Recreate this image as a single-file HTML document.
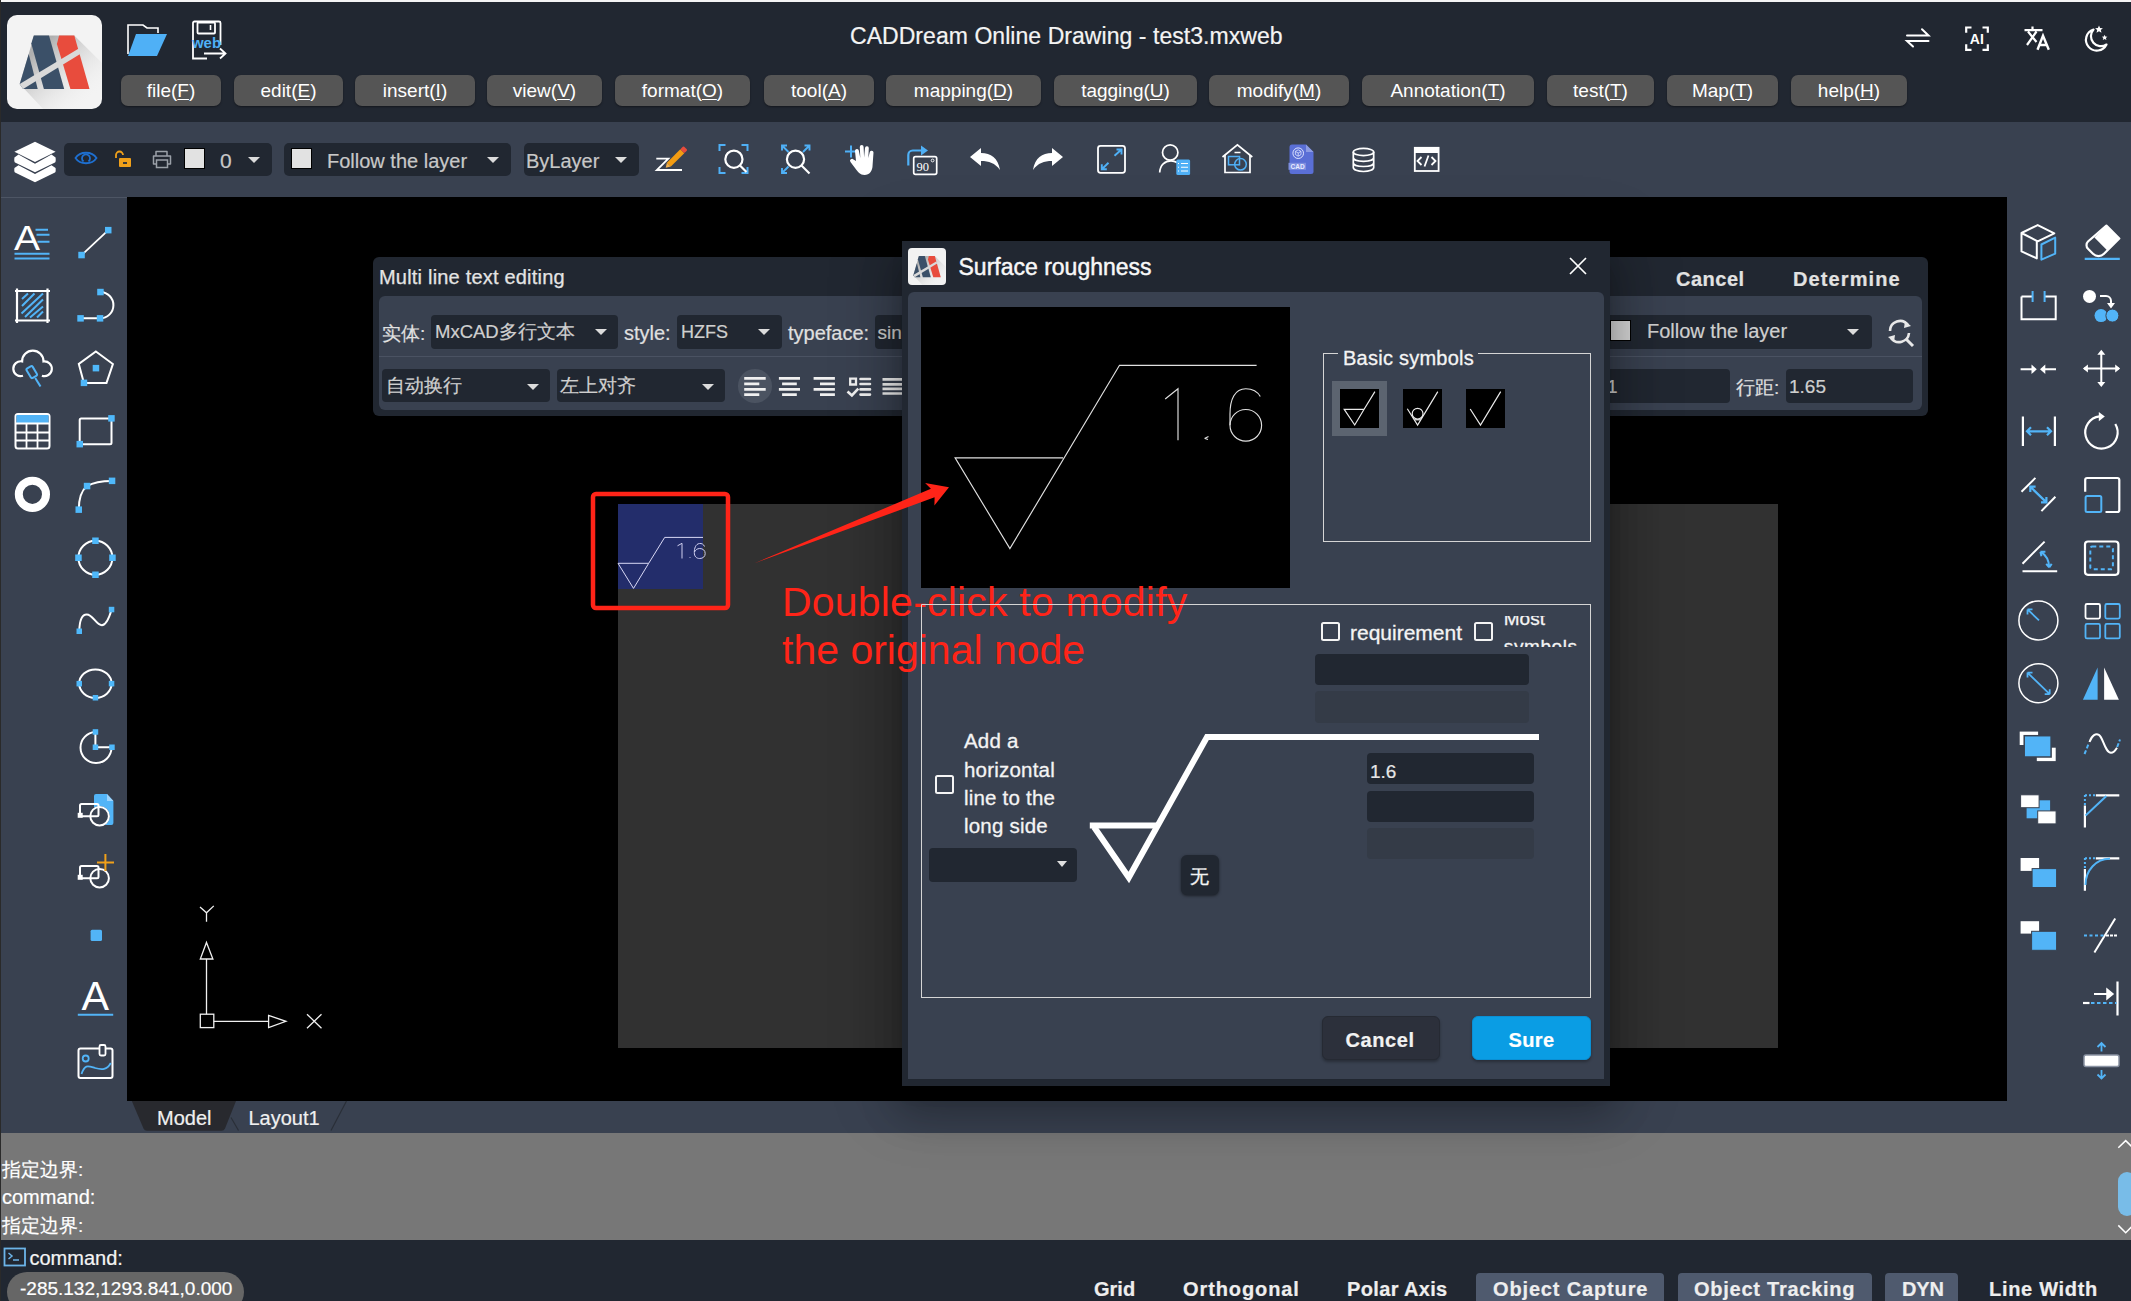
<!DOCTYPE html><html><head><meta charset="utf-8"><style>*{margin:0;padding:0;box-sizing:border-box}
html,body{width:2131px;height:1301px;overflow:hidden;background:#000;font-family:"Liberation Sans",sans-serif;color:#fff}
.a{position:absolute}
.t{position:absolute;white-space:nowrap;line-height:1;-webkit-text-stroke-width:0.2px}
#topline{left:0;top:0;width:2131px;height:2px;background:#f4f4f4}
#header{left:0;top:2px;width:2131px;height:120px;background:#212731}
#toolbar{left:0;top:122px;width:2131px;height:75px;background:#394150}
#ltb{left:0;top:197px;width:127px;height:904px;background:#394150;border-top:1px solid #4d5564}
#rtb{left:2007px;top:197px;width:124px;height:904px;background:#394150}
#canvas{left:127px;top:197px;width:1880px;height:904px;background:#000}
#tabbar{left:0;top:1101px;width:2131px;height:32px;background:#394150}
#cmdhist{left:0;top:1133px;width:2131px;height:107px;background:#777}
#cmdline{left:0;top:1240px;width:2131px;height:61px;background:#212731}
#leftedge{left:0;top:0;width:1px;height:1301px;background:#2a2a2a}
.mbtn{position:absolute;top:75px;height:31px;background:#555;border-radius:7px;box-shadow:0 1px 2px rgba(0,0,0,.4);color:#fff;font-size:19px;text-align:center;line-height:31px}
.mbtn u{text-decoration:underline;text-underline-offset:2px}
.dd{position:absolute;background:#212731;border-radius:4px}
.ddtxt{position:absolute;color:#cfd0d2;font-size:20px;white-space:nowrap;line-height:1}
.caret{position:absolute;width:0;height:0;border-left:6px solid transparent;border-right:6px solid transparent;border-top:6px solid #dcdcdc}
</style></head><body><div id="header" class="a"></div><div id="topline" class="a"></div>
<div id="toolbar" class="a"></div>
<div id="canvas" class="a"></div>
<div id="ltb" class="a"></div><div id="rtb" class="a"></div>
<div id="tabbar" class="a"></div><div id="cmdhist" class="a"></div><div id="cmdline" class="a"></div>
<div id="leftedge" class="a"></div>
<div class="a" style="left:7px;top:15px;width:95px;height:94px;border-radius:10px;background:#f3f3f3;overflow:hidden">
<svg width="95" height="94" viewBox="0 0 95 94" style="position:absolute;left:0;top:0">
<defs><linearGradient id="lsh" x1="0.2" y1="0.2" x2="0.85" y2="0.85"><stop offset="0" stop-color="#a8a8a8" stop-opacity="0.9"/><stop offset="1" stop-color="#f3f3f3" stop-opacity="0"/></linearGradient></defs>
<polygon points="27,20.5 67.3,20.5 97,50 97,96 38,96 12.7,69 21.7,39" fill="url(#lsh)"/>
<polygon points="21.7,39 30.7,74 16.1,74 12.7,69" fill="#3b5068"/>
<polygon points="26.8,20.5 42,20.5 57.2,74 36.9,74 24.3,28.4" fill="#3b5068"/>
<polygon points="52.1,20.5 67.3,20.5 82.5,74 63.4,74 49.9,28.9" fill="#e84c3d"/>
<polygon points="12.7,68.9 71.8,33.4 73.2,39.1 16.1,74" fill="#d9d9d9"/>
</svg></div>
<svg class="a" style="left:126px;top:22px" width="44" height="38" viewBox="0 0 44 38">
<path d="M2,32 V3 H17 L21,6 H32 V11" fill="none" stroke="#fff" stroke-width="1.6"/>
<polygon points="10,12 41,12 31,34 2,34" fill="#4fb0f6"/>
</svg>
<svg class="a" style="left:190px;top:20px" width="40" height="42" viewBox="0 0 40 42">
<path d="M17,38.5 H3 V3 A1.5,1.5 0 0 1 4.5,1.5 H29 A1.5,1.5 0 0 1 30.5,3 V25" fill="none" stroke="#fff" stroke-width="1.8"/>
<rect x="7.5" y="2.5" width="17.5" height="11" rx="1" fill="none" stroke="#fff" stroke-width="1.8"/>
<line x1="20.5" y1="5" x2="20.5" y2="10" stroke="#fff" stroke-width="1.6"/>
<text x="2" y="27.5" font-family="Liberation Sans" font-weight="700" font-size="14.5" fill="#4fb0f6" textLength="29" lengthAdjust="spacingAndGlyphs">web</text>
<path d="M14,33.5 H35 M30,28.5 L35.5,33.5 L30,38.5" fill="none" stroke="#fff" stroke-width="1.8"/>
</svg>
<div class="t" style="left:850.0px;top:24.9px;font-size:23px;color:#f4f4f4;letter-spacing:0.05px;">CADDream Online Drawing - test3.mxweb</div>
<div class="mbtn" style="left:121px;width:100px">file(<u>F</u>)</div>
<div class="mbtn" style="left:234px;width:109px">edit(<u>E</u>)</div>
<div class="mbtn" style="left:355px;width:120px">insert(<u>I</u>)</div>
<div class="mbtn" style="left:487px;width:115px">view(<u>V</u>)</div>
<div class="mbtn" style="left:615px;width:135px">format(<u>O</u>)</div>
<div class="mbtn" style="left:764px;width:110px">tool(<u>A</u>)</div>
<div class="mbtn" style="left:886px;width:155px">mapping(<u>D</u>)</div>
<div class="mbtn" style="left:1054px;width:143px">tagging(<u>U</u>)</div>
<div class="mbtn" style="left:1209px;width:140px">modify(<u>M</u>)</div>
<div class="mbtn" style="left:1362px;width:172px">Annotation(<u>T</u>)</div>
<div class="mbtn" style="left:1547px;width:107px">test(<u>T</u>)</div>
<div class="mbtn" style="left:1667px;width:111px">Map(<u>T</u>)</div>
<div class="mbtn" style="left:1791px;width:116px">help(<u>H</u>)</div>
<svg class="a" style="left:0;top:0" width="2131" height="130" viewBox="0 0 2131 130">
<g fill="none" stroke="#fff" stroke-width="2" stroke-linecap="round">
<path d="M1907,35.5 H1928.5 L1922,29.3 M1928.5,40.9 H1907 L1913,46.5"/>
<path d="M1971.5,27.5 H1966.2 V32.8 M1966.2,44.2 V49.8 H1971.5 M1982.5,27.5 H1987.8 V32.8 M1987.8,44.2 V49.8 H1982.5" stroke-width="2.2" stroke-linecap="butt"/>
<path d="M2024.5,30.2 H2042.5 M2032.5,26.5 V30.2 M2028,31.5 L2036.5,42 M2036.5,31.5 L2027,45" stroke-width="2.2" stroke-linecap="butt"/>
<path d="M2037.5,49.8 L2043,35.8 L2048.8,49.8 M2039.5,45 H2046.8" stroke-width="2.4" stroke-linecap="butt"/>
<path d="M2093.5,29.5 A10.8,10.8 0 1 0 2106.5,44.5 A10,10 0 0 1 2093.5,29.5 Z" stroke-width="2.2" stroke-linejoin="round"/>
</g>
<text x="1969.8" y="44.3" font-family="Liberation Sans" font-weight="700" font-size="15.5" fill="#fff" textLength="14" lengthAdjust="spacingAndGlyphs">AI</text>
<path d="M2099,25.5 l1.1,2.6 2.8,0.2 -2.1,1.8 0.7,2.7 -2.5,-1.5 -2.5,1.5 0.7,-2.7 -2.1,-1.8 2.8,-0.2z" fill="#fff"/>
<path d="M2104.6,34.8 l0.8,1.8 2,0.2 -1.5,1.3 0.5,1.9 -1.8,-1 -1.8,1 0.5,-1.9 -1.5,-1.3 2,-0.2z" fill="#fff"/>
</svg>
<svg class="a" style="left:14px;top:141px" width="42" height="42" viewBox="0 0 42 42">
<path d="M21,0.8 L41.6,10.8 L21,21 L0.4,10.8Z" fill="#fff"/>
<path d="M4.5,13.6 L21,22.8 L37.5,13.6 L41.6,16.5 Q42,21 41,21.5 L21,31.3 L1,21.5 Q0,21 0.4,16.5Z" fill="#fff"/>
<path d="M4.5,24.2 L21,33 L37.5,24.2 L41.6,27 Q42,31 41,31.6 L21,41.3 L1,31.6 Q0,31 0.4,27Z" fill="#fff"/>
</svg>
<div class="dd" style="left:64px;top:143px;width:208px;height:33px;border-radius:5px"></div>
<svg class="a" style="left:74px;top:150px" width="24" height="16" viewBox="0 0 24 16">
<path d="M1.5,8 C6,1 18,1 22.5,8 C18,15 6,15 1.5,8Z" fill="none" stroke="#1e6fd0" stroke-width="1.8"/>
<path d="M9.5,11.5 A4,4 0 1 1 14.5,11.5" fill="none" stroke="#1e6fd0" stroke-width="1.8"/>
</svg>
<svg class="a" style="left:114px;top:150px" width="18" height="18" viewBox="0 0 18 18">
<path d="M2,8 V5 A3.5,3.5 0 0 1 9,5" fill="none" stroke="#f0a01a" stroke-width="1.8"/>
<rect x="5" y="8" width="12" height="9" rx="1" fill="#f0a01a"/><rect x="9" y="12" width="4" height="2" fill="#3a3a3a"/>
</svg>
<svg class="a" style="left:152px;top:149px" width="20" height="20" viewBox="0 0 20 20">
<path d="M4,7 V2.5 H15 V7 M4,15 H1.5 V7 H18.5 V15 H16" fill="none" stroke="#9aa0a8" stroke-width="1.5" stroke-linejoin="round"/>
<rect x="4.5" y="11" width="11" height="7.5" fill="none" stroke="#9aa0a8" stroke-width="1.5"/>
</svg>
<div class="a" style="left:184px;top:148px;width:21px;height:21px;background:#e2e2e2;border:1px solid #000"></div>
<div class="t" style="left:220.0px;top:150.2px;font-size:21px;color:#c8c8c8;">0</div>
<div class="caret" style="left:248px;top:157px"></div>
<div class="dd" style="left:284px;top:143px;width:227px;height:33px;border-radius:5px"></div>
<div class="a" style="left:291px;top:148px;width:21px;height:21px;background:#e2e2e2;border:1px solid #000"></div>
<div class="t" style="left:327.0px;top:150.5px;font-size:20px;color:#c8c8c8;">Follow the layer</div>
<div class="caret" style="left:487px;top:157px"></div>
<div class="dd" style="left:524px;top:143px;width:115px;height:33px;border-radius:5px"></div>
<div class="t" style="left:526.0px;top:150.5px;font-size:20px;color:#c8c8c8;">ByLayer</div>
<div class="caret" style="left:615px;top:157px"></div>
<svg class="a" style="left:640px;top:135px" width="60" height="50" viewBox="640 135 60 50">
<path d="M656.3,158.7 H668.3 L656.8,170 H682" fill="none" stroke="#fff" stroke-width="1.8"/>
<g transform="translate(3.5,-3.5) rotate(-45 673.5 160)"><rect x="662" y="157.2" width="19" height="5.6" fill="#f39c12"/><rect x="681" y="157.2" width="4.5" height="5.6" rx="1" fill="#e74c3c"/><path d="M662,157.2 L657.5,160 L662,162.8Z" fill="#f3b04a"/></g>
</svg>
<svg class="a" style="left:700px;top:135px" width="250" height="50" viewBox="700 135 250 50">
<path d="M719.5,151 V145 H725.5 M741.5,145 H747.5 V151 M747.5,167 V173 H741.5 M725.5,173 H719.5 V167" fill="none" stroke="#4fb0f6" stroke-width="2"/>
<circle cx="733.9" cy="159.2" r="8.6" fill="none" stroke="#fff" stroke-width="2.2"/>
<line x1="740" y1="165.5" x2="746.5" y2="172" stroke="#fff" stroke-width="2.2"/>
<path d="M788.5,152 L782,145.5 M782,150.5 V145.5 H787 M803,152 L809.5,145.5 M804.5,145.5 H809.5 V150.5 M788.5,166.5 L782,173 M782,168 V173 H787" fill="none" stroke="#4fb0f6" stroke-width="1.9"/>
<circle cx="795.5" cy="159.2" r="8.6" fill="none" stroke="#fff" stroke-width="2.2"/>
<line x1="801.5" y1="165.5" x2="809.5" y2="173.5" stroke="#fff" stroke-width="2.2"/>
<path d="M851,145.5 V157.5 M845,151.5 H857" stroke="#4fb0f6" stroke-width="2"/>
<path d="M856,161 L855,151 A1.9,1.9 0 0 1 858.8,150.6 L860.3,158 L859.8,147 A1.9,1.9 0 0 1 863.6,147 L864.1,157.5 L865,148 A1.9,1.9 0 0 1 868.8,148.3 L868.3,158 L869.8,152 A1.9,1.9 0 0 1 873.5,152.5 L872.6,165 C872.6,171 869.5,175 864.5,175 C860,175 858,172 855,168 L850.5,162 A1.9,1.9 0 0 1 853.5,159.5 Z" fill="#fff"/>
<path d="M908.3,165.5 V155 A4.5,4.5 0 0 1 912.8,150.5 H922" fill="none" stroke="#4fb0f6" stroke-width="2.2"/>
<path d="M921,145.5 L928,150.5 L921,155.5Z" fill="#4fb0f6"/>
<rect x="913.7" y="156.6" width="23" height="17.8" rx="1.8" fill="none" stroke="#fff" stroke-width="1.7"/>
<text x="916.5" y="171" font-family="Liberation Serif" font-size="12.5" fill="#fff" textLength="12.5" lengthAdjust="spacingAndGlyphs">90</text>
<circle cx="932.6" cy="160.5" r="1.4" fill="none" stroke="#fff" stroke-width="0.9"/>
</svg>
<svg class="a" style="left:969px;top:146px" width="32" height="26" viewBox="0 0 32 26">
<path d="M1,11 L12,2 V7 C22,7 29,12 31,24 C26,17 20,15 12,15 V20Z" fill="#fff"/>
</svg>
<svg class="a" style="left:1032px;top:146px" width="32" height="26" viewBox="0 0 32 26">
<path d="M31,11 L20,2 V7 C10,7 3,12 1,24 C6,17 12,15 20,15 V20Z" fill="#fff"/>
</svg>
<svg class="a" style="left:1085px;top:135px" width="370" height="50" viewBox="1085 135 370 50">
<rect x="1098" y="145.8" width="27" height="27" rx="2.5" fill="none" stroke="#fff" stroke-width="1.8"/>
<path d="M1114.5,155.8 L1121.5,149.5 M1116.5,149.5 H1121.5 V154.5 M1108.5,162.8 L1101.8,169.2 M1101.8,164.2 V169.2 H1106.8" fill="none" stroke="#4fb0f6" stroke-width="1.9"/>
<circle cx="1170.2" cy="152.5" r="7.7" fill="none" stroke="#fff" stroke-width="1.7"/>
<path d="M1159.7,172.5 C1160,165 1165,160.8 1171,160.8 C1173.5,160.8 1175.5,161.5 1177,162.5" fill="none" stroke="#fff" stroke-width="1.7"/>
<rect x="1176.3" y="159.4" width="13.8" height="15.5" rx="1.5" fill="#4fb0f6"/>
<path d="M1181,163.5 H1188 M1181,167.3 H1188 M1181,171 H1188" stroke="#fff" stroke-width="1.1"/>
<path d="M1178,163.5 h1 M1178,167.3 h1 M1178,171 h1" stroke="#fff" stroke-width="1.1"/>
<path d="M1222.5,157 L1237.4,144.8 L1252.3,157" fill="none" stroke="#fff" stroke-width="1.7"/>
<path d="M1225,155 V172.5 H1250 V155" fill="none" stroke="#fff" stroke-width="1.7"/>
<path d="M1234.5,152.5 H1240.5" stroke="#fff" stroke-width="1.5"/>
<rect x="1228.5" y="156.5" width="11" height="8.3" fill="none" stroke="#4fb0f6" stroke-width="1.5"/>
<circle cx="1240.5" cy="164.3" r="5.8" fill="none" stroke="#4fb0f6" stroke-width="1.5"/>
<path d="M1289.5,147 A2.5,2.5 0 0 1 1292,144.5 H1306 L1313.5,152 V171.5 A2.5,2.5 0 0 1 1311,174 H1292 A2.5,2.5 0 0 1 1289.5,171.5Z" fill="#5a6fd6"/>
<path d="M1306,144.5 V152 H1313.5Z" fill="#8d9ce4"/>
<rect x="1288.5" y="162.8" width="17.5" height="7" fill="#7e8fe0"/>
<text x="1290.5" y="169" font-family="Liberation Sans" font-weight="700" font-size="6.5" fill="#e8ecff">CAD</text>
<circle cx="1298.2" cy="153.2" r="5.3" fill="none" stroke="#dfe4ff" stroke-width="1"/>
<path d="M1298.2,149.8 L1301,151.4 V154.6 L1298.2,156.2 L1295.4,154.6 V151.4Z M1295.4,151.4 L1298.2,153 L1301,151.4 M1298.2,153 V156.2" fill="none" stroke="#dfe4ff" stroke-width="0.8"/>
<ellipse cx="1363.5" cy="152" rx="10.2" ry="3.6" fill="none" stroke="#fff" stroke-width="1.7"/>
<path d="M1353.3,152 V167.5 C1353.3,169.7 1357.5,171.5 1363.5,171.5 C1369.5,171.5 1373.7,169.7 1373.7,167.5 V152 M1353.3,157.5 C1353.3,159.7 1357.5,161.3 1363.5,161.3 C1369.5,161.3 1373.7,159.7 1373.7,157.5 M1353.3,162.7 C1353.3,164.9 1357.5,166.5 1363.5,166.5 C1369.5,166.5 1373.7,164.9 1373.7,162.7" fill="none" stroke="#fff" stroke-width="1.7"/>
<rect x="1414.8" y="147.8" width="23.8" height="23.2" fill="none" stroke="#fff" stroke-width="1.8"/>
<rect x="1414.8" y="147.8" width="23.8" height="5.2" fill="#fff"/>
<path d="M1421.5,157 L1417.5,161 L1421.5,165 M1431.5,157 L1435.5,161 L1431.5,165 M1428.5,155.5 L1424.5,166.5" fill="none" stroke="#fff" stroke-width="1.8"/>
</svg>

<svg class="a" style="left:0;top:0" width="2131" height="1301" viewBox="0 0 2131 1301">
<g fill="none" stroke="#fff" stroke-width="2">
<text x="14" y="250" font-family="Liberation Sans" font-size="35" fill="#fff" stroke="none" textLength="26" lengthAdjust="spacingAndGlyphs">A</text>
<path d="M35.5,229.8 H48 M36.5,234.8 H49.5 M37.5,241.8 H49.5 M14.5,253.7 H49.5 M14.5,258.4 H49.5" stroke="#52b4f7" stroke-width="2"/>
<path d="M15,291 H50 M15,320.5 H50 M17,288.5 V323 M47.5,288.5 V323" stroke-width="2.2"/>
<path d="M22,299 L28,293.5 M22,306 L34.5,293.5 M21.5,313.5 L43,293.5 M25,317 L43,299.5 M30,317.5 L43,306.5 M37,317.5 L43,311.5" stroke="#52b4f7" stroke-width="2"/>
<path d="M23,375.7 A7.4,7.4 0 1 1 22.1,361.4 A10.7,10.7 0 0 1 43.5,361.4 A7.4,7.4 0 1 1 41.9,375.7" stroke-width="2.2"/>
<g transform="rotate(-30.5 31.75 372.1)"><rect x="28.25" y="366.6" width="7" height="11" rx="1.5" stroke="#52b4f7" stroke-width="2"/></g><path d="M35.2,378 L40.5,386.6" stroke="#52b4f7" stroke-width="2"/>
<rect x="15.5" y="414" width="34" height="34.5" rx="2.5" stroke-width="2"/>
<rect x="16.5" y="415" width="32" height="8" fill="#52b4f7" stroke="none"/>
<path d="M15.5,423.5 H49.5 M15.5,432.5 H49.5 M15.5,440.5 H49.5 M26.5,423.5 V448 M37.5,423.5 V448" stroke-width="1.8"/>
<circle cx="32.4" cy="494.3" r="13.6" stroke-width="8"/>
<path d="M81.6,255.1 L108.3,230.2" stroke-width="1.8"/><rect x="78.3" y="251.8" width="6.5" height="6.5" fill="#4fb8fa" stroke="none"/><rect x="105.0" y="226.9" width="6.5" height="6.5" fill="#4fb8fa" stroke="none"/>
<path d="M80.6,318.3 H100 A13,13 0 0 0 100.5,292" stroke-width="2"/><rect x="77.3" y="315.1" width="6.5" height="6.5" fill="#4fb8fa" stroke="none"/><rect x="96.8" y="315.1" width="6.5" height="6.5" fill="#4fb8fa" stroke="none"/><rect x="97.2" y="288.8" width="6.5" height="6.5" fill="#4fb8fa" stroke="none"/>
<path d="M95.9,351.5 L112.9,364 L106.5,382.9 L83.9,382.9 L78.8,364 Z" stroke-width="2"/><rect x="92.7" y="364.9" width="6.5" height="6.5" fill="#4fb8fa" stroke="none"/><rect x="80.7" y="379.6" width="6.5" height="6.5" fill="#4fb8fa" stroke="none"/>
<rect x="79.7" y="418.4" width="31.8" height="25.8" rx="1.5" stroke-width="2"/><rect x="108.2" y="415.1" width="6.5" height="6.5" fill="#4fb8fa" stroke="none"/><rect x="76.5" y="440.9" width="6.5" height="6.5" fill="#4fb8fa" stroke="none"/>
<path d="M78.8,509.7 C78.8,498 82,490 87.1,486 C94,482 102,480.9 112,480.9" stroke-width="2"/><rect x="75.5" y="506.4" width="6.5" height="6.5" fill="#4fb8fa" stroke="none"/><rect x="83.8" y="482.8" width="6.5" height="6.5" fill="#4fb8fa" stroke="none"/><rect x="108.8" y="477.6" width="6.5" height="6.5" fill="#4fb8fa" stroke="none"/>
<circle cx="95.4" cy="557.7" r="17" stroke-width="2"/><rect x="92.2" y="537.5" width="6.5" height="6.5" fill="#4fb8fa" stroke="none"/><rect x="92.2" y="571.5" width="6.5" height="6.5" fill="#4fb8fa" stroke="none"/><rect x="75.2" y="554.5" width="6.5" height="6.5" fill="#4fb8fa" stroke="none"/><rect x="109.2" y="554.5" width="6.5" height="6.5" fill="#4fb8fa" stroke="none"/>
<path d="M79.3,631 C79.5,620 82,614.4 86.7,614.4 C93,614.4 96,625.2 101.9,625.2 C107,625.2 110,615 111.6,609.5" stroke-width="2"/><rect x="76.5" y="628.5" width="5.5" height="5.5" fill="#4fb8fa" stroke="none"/><rect x="108.8" y="606.8" width="5.5" height="5.5" fill="#4fb8fa" stroke="none"/>
<ellipse cx="95.4" cy="683.6" rx="16.2" ry="14.2" stroke-width="2"/><rect x="76.5" y="680.9" width="5.5" height="5.5" fill="#4fb8fa" stroke="none"/><rect x="108.8" y="680.9" width="5.5" height="5.5" fill="#4fb8fa" stroke="none"/><rect x="92.7" y="695.0" width="5.5" height="5.5" fill="#4fb8fa" stroke="none"/>
<path d="M95.4,732 A15.5,15.5 0 1 0 111.5,748 M95.4,732 V747.2 H112" stroke-width="2"/><rect x="92.7" y="744.5" width="5.5" height="5.5" fill="#4fb8fa" stroke="none"/><rect x="92.7" y="729.2" width="5.5" height="5.5" fill="#4fb8fa" stroke="none"/><rect x="109.2" y="744.5" width="5.5" height="5.5" fill="#4fb8fa" stroke="none"/>
<defs><mask id="bm"><rect x="60" y="780" width="70" height="60" fill="#fff"/><circle cx="99.6" cy="816.2" r="11.3" fill="#000"/></mask></defs><g mask="url(#bm)"><path d="M94,796 A2,2 0 0 1 96,794 H107 L113.4,801 V823 A2,2 0 0 1 111.4,825 H94Z" fill="#52b4f7" stroke="none"/><path d="M107,794 V801 H113.4Z" fill="#9fd4fb" stroke="none"/></g>
<rect x="80" y="804" width="18.5" height="12.2" rx="1.5" stroke-width="2"/><circle cx="99.6" cy="816.2" r="9.3" stroke-width="2"/><rect x="77.7" y="812.8" width="5" height="5" fill="#fff" stroke="none"/>
<rect x="80" y="866" width="18.5" height="12.2" rx="1.5" stroke-width="2"/><circle cx="99.6" cy="878.2" r="9.3" stroke-width="2"/><rect x="77.7" y="874.8" width="5" height="5" fill="#fff" stroke="none"/>
<path d="M97,862.6 H114 M105.4,854 V871" stroke="#f0a01a" stroke-width="2"/>
<rect x="90.6" y="929.8" width="11.4" height="11.1" rx="1.5" fill="#52b4f7" stroke="none"/>
<text x="81.5" y="1010" font-family="Liberation Sans" font-size="40" fill="#fff" stroke="none" textLength="27.5" lengthAdjust="spacingAndGlyphs">A</text><path d="M77.8,1014.8 H113.2" stroke="#52b4f7" stroke-width="2"/>
<rect x="78.5" y="1048.5" width="34" height="29.5" rx="2" stroke-width="2"/><rect x="99.5" y="1045" width="6" height="10.5" rx="1.5" fill="#394150" stroke-width="1.8"/>
<circle cx="85.7" cy="1058.5" r="3" stroke="#52b4f7" stroke-width="1.8"/><path d="M81.5,1074 C85,1064 88,1066 95,1068 C102,1070 107,1070 110.8,1063" stroke="#52b4f7" stroke-width="1.8"/>
<path d="M2037.7,225.1 L2054.3,233.4 L2037.7,241.3 L2021.5,233 Z M2021.5,233 V251.4 L2036.8,258.4 V241.3" stroke-width="2" stroke-linejoin="round"/>
<path d="M2041.4,244.5 L2055.2,237.6 V253.7 L2041.4,259.7 Z" stroke="#52b4f7" stroke-width="2" stroke-linejoin="round"/>
<path d="M2021.5,296.6 V319.2 H2055.7 V296.6 H2044.6 M2032.6,296.6 H2021.5" stroke-width="2"/><path d="M2032.6,291 V302 M2044.6,291 V302" stroke="#52b4f7" stroke-width="2"/>
<path d="M2020.6,369.3 H2032 M2056,369.3 H2045" stroke-width="2"/><path d="M2031.5,364.5 L2036.8,369.3 L2031.5,374.1Z M2045.3,364.5 L2040,369.3 L2045.3,374.1Z" fill="#fff" stroke="none"/>
<path d="M2022.9,416.6 V446.1 M2054.9,416.6 V446.1" stroke-width="2.2"/><path d="M2027,431.3 H2051 M2031,427.3 L2027,431.3 L2031,435.3 M2047,427.3 L2051,431.3 L2047,435.3" stroke="#52b4f7" stroke-width="2.2"/>
<path d="M2021.5,491.8 L2035.4,477.9 M2041.4,511.1 L2055.4,496.8" stroke-width="2"/><path d="M2030.3,486.7 L2046.4,502.4 M2030.3,492 V486.7 H2035.6 M2046.4,497 V502.4 H2041" stroke="#52b4f7" stroke-width="2.2"/>
<path d="M2022.5,563.7 L2044.6,541.6 M2022.5,571.3 H2057.2" stroke-width="2"/><path d="M2040.4,551.7 C2046,555 2049,561 2049.2,567.4 M2040.4,551.7 l5,0 M2040.4,551.7 l1,4.5 M2049.2,567.4 l-3,-3.5 M2049.2,567.4 l2.5,-3.5" stroke="#52b4f7" stroke-width="2"/>
<circle cx="2038.4" cy="620.4" r="19.5" stroke-width="1.5"/><path d="M2039,620.4 L2027.5,609.4 M2027.5,609.4 h5 M2027.5,609.4 v5" stroke="#52b4f7" stroke-width="1.8"/>
<circle cx="2038.4" cy="683.2" r="19.5" stroke-width="1.5"/><path d="M2027.5,672.6 L2049.7,694.2 M2027.5,672.6 h5 M2027.5,672.6 v5 M2049.7,694.2 h-5 M2049.7,694.2 v-5" stroke="#52b4f7" stroke-width="1.8"/>
<rect x="2019.7" y="731.6" width="18.4" height="13.4" fill="#fff" stroke="none"/><rect x="2036.8" y="747.7" width="18.9" height="13.4" fill="#fff" stroke="none"/><rect x="2024.2" y="735.7" width="26.9" height="21.3" fill="#52b4f7" stroke="#394150" stroke-width="1.5"/>
<rect x="2026.6" y="800.3" width="23.5" height="18" fill="#52b4f7" stroke="none"/><rect x="2020.6" y="794.8" width="18.5" height="12.9" fill="#fff" stroke="#394150" stroke-width="1"/><rect x="2037.7" y="810.9" width="18.4" height="13" fill="#fff" stroke="#394150" stroke-width="1"/>
<rect x="2020.6" y="858" width="18.5" height="12.9" fill="#fff" stroke="none"/><rect x="2032.1" y="868.6" width="24.5" height="18.9" fill="#52b4f7" stroke="#394150" stroke-width="1"/>
<rect x="2020.6" y="921.2" width="18.5" height="12.4" fill="#fff" stroke="none"/><rect x="2031.6" y="931.3" width="25" height="19" fill="#52b4f7" stroke="#394150" stroke-width="1"/>
<path d="M2106.4,225.6 L2119.3,238.5 L2104,253.8 C2101,256.8 2096,256.8 2093,253.8 L2088,248.8 C2086,246.8 2086,243.5 2088,241.5 Z" stroke-width="2.2" stroke-linejoin="round"/><path d="M2106.4,225.6 L2119.3,238.5 L2107.3,250.5 L2094.4,237.6 Z" fill="#fff" stroke="none"/><path d="M2084.7,258.8 H2119.8" stroke="#52b4f7" stroke-width="2.2"/>
<circle cx="2089.5" cy="296.4" r="6.5" fill="#fff" stroke="none"/><path d="M2100,296 H2106 A5,5 0 0 1 2111,301 V305" stroke-width="2"/><path d="M2107,303 H2115 L2111,308.5Z" fill="#fff" stroke="none"/><circle cx="2101" cy="315.6" r="6.5" fill="#52b4f7" stroke="none"/><circle cx="2112.4" cy="315.6" r="6.5" fill="#52b4f7" stroke="#394150" stroke-width="1"/>
<path d="M2101.3,352 V385 M2084,368.6 H2119" stroke-width="2"/><path d="M2101.3,349.7 l-4,5 h8z M2101.3,387 l-4,-5 h8z M2082.9,368.6 l5,-4 v8z M2120.2,368.6 l-5,-4 v8z" fill="#fff" stroke="none"/>
<path d="M2099.5,416.3 A16.2,16.2 0 1 0 2115.3,424" stroke-width="2.2"/><path d="M2098.8,412 L2104.8,416.6 L2098.8,421.2Z" fill="#fff" stroke="none"/>
<path d="M2085.2,491.8 V480 A2,2 0 0 1 2087.2,478 H2117.3 A2,2 0 0 1 2119.3,480 V510 A2,2 0 0 1 2117.3,512 H2105.5" stroke-width="2.2"/><rect x="2085.6" y="496" width="15.7" height="16" rx="1.5" stroke="#52b4f7" stroke-width="2"/>
<rect x="2085" y="541.5" width="33.4" height="33.3" rx="3" stroke-width="2.2"/><rect x="2090.3" y="546.6" width="22.6" height="22.6" rx="2" stroke="#52b4f7" stroke-width="2" stroke-dasharray="4,3"/>
<rect x="2085.5" y="604" width="14.5" height="14.6" rx="1.5" stroke-width="1.8"/><rect x="2105.3" y="604" width="14.5" height="14.6" rx="1.5" stroke="#52b4f7" stroke-width="1.8"/><rect x="2085.5" y="623.9" width="14.5" height="14.5" rx="1.5" stroke="#52b4f7" stroke-width="1.8"/><rect x="2105.3" y="623.9" width="14.5" height="14.5" rx="1.5" stroke="#52b4f7" stroke-width="1.8"/>
<path d="M2097.6,667.5 V699.8 H2082.9Z" fill="#52b4f7" stroke="none"/><path d="M2104.1,667.5 V699.8 H2118.9Z" fill="#fff" stroke="none"/>
<path d="M2089.5,742 C2092,735 2096,733 2099,735 C2103,737 2105,752.8 2111,752.8 C2113,752.8 2115,751 2117,747.7" stroke-width="2"/><path d="M2084.5,754 L2089,743 M2117.2,747 L2120,739.5" stroke="#52b4f7" stroke-width="2" stroke-dasharray="4,2"/>
<path d="M2084.9,805.4 V827.5 M2095.8,795.3 H2119.3" stroke-width="2.2"/><path d="M2084.9,795 V805 M2085,795.3 H2095.8" stroke="#52b4f7" stroke-width="2" stroke-dasharray="2,2"/><path d="M2085.6,815.6 L2106.4,796" stroke="#52b4f7" stroke-width="2"/>
<path d="M2084.9,869 V890.7 M2095.8,858.3 H2119.3" stroke-width="2.2"/><path d="M2084.9,858 V869 M2085,858.3 H2095.8" stroke="#52b4f7" stroke-width="2" stroke-dasharray="2,2"/><path d="M2085.5,885 A24,26 0 0 1 2110,858.8" stroke="#52b4f7" stroke-width="2"/>
<path d="M2094.4,952.5 L2115.2,918.4" stroke-width="2"/><path d="M2084,935.5 H2104" stroke="#52b4f7" stroke-width="2" stroke-dasharray="3,2.5"/><path d="M2106,935.5 H2118" stroke-width="2" stroke-dasharray="3,1"/>
<path d="M2117.5,981.5 V1015.5 M2094,994 H2110" stroke-width="2.2"/><path d="M2107,989 L2113,994 L2107,999Z" fill="#fff" stroke="#fff" stroke-width="1.5"/><path d="M2083,1003 H2089.5" stroke-width="2.2"/><path d="M2091,1003 H2116.5" stroke="#52b4f7" stroke-width="2.2" stroke-dasharray="3.5,2.5"/>
<path d="M2101.5,1051.5 V1043 M2097.5,1047 L2101.5,1043 L2105.5,1047 M2101.5,1070 V1078.5 M2097.5,1074.5 L2101.5,1078.5 L2105.5,1074.5" stroke="#52b4f7" stroke-width="1.8"/><rect x="2084" y="1055" width="35" height="11.5" rx="2" fill="#fff" stroke="#8a93a3" stroke-width="1.5"/>
</g></svg>
<div class="a" style="left:618px;top:504px;width:1160px;height:544px;background:#313131;"></div>
<div class="a" style="left:618px;top:504px;width:85px;height:85px;background:#232d6b;"></div>
<svg class="a" style="left:0;top:0" width="2131" height="1301" viewBox="0 0 2131 1301">
<g fill="none" stroke="#d8d8f5" stroke-width="1">
<path d="M618,563.3 H648.7 L633.5,588.4 L618,563.3 M648.7,563.3 L664.7,537.4 H703"/>
</g>
<g fill="none" stroke="#d0d0f0" stroke-width="1"><path d="M677.5,545.8 L682,543.3 V558.5"/><path d="M689.5,558 l0.8,-0.8"/><path d="M704.5,546.5 C703.5,544 701.5,543.3 699.5,543.5 C695.5,544 694.3,548.5 694.3,552.5 C694.3,556.5 696.5,558.5 699.7,558.5 C703,558.5 705.2,556.5 705.2,553.5 C705.2,550.5 703,548.5 699.7,548.5 C697,548.5 695,550.5 694.5,552"/></g>
<rect x="593" y="494" width="135" height="114" rx="3" fill="none" stroke="#ff2418" stroke-width="4.5"/>
<g fill="none" stroke="#f0f0f0" stroke-width="1.3">
<path d="M200,907 L206.5,912.8 L213.8,905.9 M206.5,912.8 V921.7"/>
<path d="M206.5,942.4 L212.9,959 H200.3 Z M206.5,959 V1014.2"/>
<rect x="200.3" y="1014.2" width="13.5" height="13.4"/>
<path d="M213.8,1021.3 H268.6 M268.6,1015.4 V1027.6 L285.9,1021.3 Z"/>
<path d="M307,1014.2 L321.5,1028.2 M321.5,1014.2 L307,1028.2"/>
</g>
</svg>
<div class="a" style="left:373px;top:257px;width:1555px;height:159px;background:#212731;border-radius:6px"></div>
<div class="t" style="left:379.0px;top:267.2px;font-size:20px;color:#e4e4e4;letter-spacing:0.2px;-webkit-text-stroke:0.25px #e4e4e4;">Multi line text editing</div>
<div class="t" style="left:1676.0px;top:269.3px;font-size:20px;color:#e2e2e2;font-weight:700;letter-spacing:0.5px;">Cancel</div>
<div class="t" style="left:1793.0px;top:269.3px;font-size:20px;color:#e2e2e2;font-weight:700;letter-spacing:1.1px;">Determine</div>
<div class="a" style="left:379px;top:296px;width:1543px;height:114px;background:#394150;border-radius:6px"></div>
<div class="a" style="left:379px;top:356px;width:1543px;height:1px;background:#4a5262;"></div>
<div class="t" style="left:382.0px;top:323.9px;font-size:19px;color:#e0e0e0;">实体:</div>
<div class="dd" style="left:431px;top:315px;width:187px;height:34px"></div>
<div class="t" style="left:435.0px;top:322.9px;font-size:18.5px;color:#cfcfcf;">MxCAD多行文本</div>
<div class="a" style="left:595px;top:329px;width:0;height:0;border-left:6.0px solid transparent;border-right:6.0px solid transparent;border-top:6px solid #dcdcdc"></div>
<div class="t" style="left:624.0px;top:323.0px;font-size:20px;color:#e0e0e0;">style:</div>
<div class="dd" style="left:677px;top:315px;width:105px;height:34px"></div>
<div class="t" style="left:681.0px;top:323.3px;font-size:18px;color:#cfcfcf;">HZFS</div>
<div class="a" style="left:758px;top:329px;width:0;height:0;border-left:6.0px solid transparent;border-right:6.0px solid transparent;border-top:6px solid #dcdcdc"></div>
<div class="t" style="left:788.0px;top:323.0px;font-size:20px;color:#e0e0e0;">typeface:</div>
<div class="dd" style="left:875px;top:315px;width:60px;height:34px"></div>
<div class="t" style="left:877.5px;top:322.5px;font-size:19px;color:#cfcfcf;">sin</div>
<div class="dd" style="left:382px;top:369px;width:168px;height:33px"></div>
<div class="t" style="left:386.0px;top:376.2px;font-size:19px;color:#cfcfcf;">自动换行</div>
<div class="a" style="left:527px;top:384px;width:0;height:0;border-left:6.0px solid transparent;border-right:6.0px solid transparent;border-top:6px solid #dcdcdc"></div>
<div class="dd" style="left:557px;top:369px;width:168px;height:33px"></div>
<div class="t" style="left:560.0px;top:376.2px;font-size:19px;color:#cfcfcf;">左上对齐</div>
<div class="a" style="left:702px;top:384px;width:0;height:0;border-left:6.0px solid transparent;border-right:6.0px solid transparent;border-top:6px solid #dcdcdc"></div>
<div class="a" style="left:738.2px;top:369px;width:33.6px;height:33.6px;border-radius:50%;background:#4b5361"></div>
<svg class="a" style="left:0;top:0" width="2131" height="1301" viewBox="0 0 2131 1301"><g stroke="#f0f0f0" stroke-width="2">
<path d="M744.2,378.4 H765.7 M744.2,383.8 H759.3 M744.2,389.4 H765.7 M744.2,394.6 H759.3" stroke-width="2.8"/>
<path d="M778.9,378.4 H800 M782.1,383.8 H796.8 M778.9,389.4 H800 M782.1,394.6 H796.8" stroke-width="2.8"/>
<path d="M813.6,378.4 H834.9 M820,383.8 H834.9 M813.6,389.4 H834.9 M820,394.6 H834.9" stroke-width="2.8"/>
<path d="M850.2,378.7 h5.8 v5.8 h-5.8z" fill="none" stroke-width="2.3"/><path d="M847.5,391.5 L851.9,395.5 L858.3,388.6" fill="none" stroke-width="2.6"/>
<path d="M860.5,379 H870 M860.5,384 H870 M860.5,389.4 H870 M860.5,394.6 H870" stroke-width="2.6" stroke-linecap="round"/>
<path d="M882.5,379.4 H902.1 M882.5,384.4 H902.1 M882.5,388.9 H902.1 M882.5,393.5 H902.1" stroke-width="2.6"/>
</g></svg>
<div class="dd" style="left:1590px;top:315px;width:282px;height:34px"></div>
<div class="a" style="left:1610px;top:320px;width:21px;height:21px;background:#d9d9d9;border:1px solid #000"></div>
<div class="t" style="left:1647.0px;top:321.2px;font-size:20px;color:#cfcfcf;">Follow the layer</div>
<div class="a" style="left:1847px;top:329px;width:0;height:0;border-left:6.0px solid transparent;border-right:6.0px solid transparent;border-top:6px solid #dcdcdc"></div>
<svg class="a" style="left:1886px;top:318px" width="30" height="30" viewBox="0 0 30 30">
<path d="M4,13 A10,10 0 0 1 22,7" fill="none" stroke="#e8e8e8" stroke-width="2.6"/><path d="M19,3 L25,8 L18,10Z" fill="#e8e8e8"/>
<path d="M23,15 A10,10 0 0 1 5,20" fill="none" stroke="#e8e8e8" stroke-width="2.6"/><path d="M8,24 L2,19 L9,17Z" fill="#e8e8e8"/>
<path d="M20,21 L27,28" stroke="#e8e8e8" stroke-width="3"/>
</svg>
<div class="dd" style="left:1590px;top:369px;width:140px;height:34px"></div>
<div class="t" style="left:1607.0px;top:377.4px;font-size:19px;color:#cfcfcf;">1</div>
<div class="t" style="left:1736.0px;top:378.2px;font-size:19px;color:#e0e0e0;">行距:</div>
<div class="dd" style="left:1786px;top:369px;width:127px;height:34px"></div>
<div class="t" style="left:1789.0px;top:377.4px;font-size:19px;color:#cfcfcf;">1.65</div>
<div class="a" style="left:902px;top:241px;width:708px;height:845px;background:#212731;box-shadow:0 11px 15px -7px rgba(0,0,0,.25),0 24px 38px 3px rgba(0,0,0,.2),0 9px 60px 12px rgba(0,0,0,.2)"></div>
<div class="a" style="left:908px;top:292px;width:696px;height:787px;background:#394150;border-radius:6px 6px 0 0"></div>
<div class="a" style="left:908px;top:248px;width:38px;height:37px;border-radius:4px;background:#f2f2f2;overflow:hidden">
<svg width="38" height="37" viewBox="0 0 95 94" style="position:absolute;left:0;top:0">
<defs><linearGradient id="lsh2" x1="0.2" y1="0.2" x2="0.85" y2="0.85"><stop offset="0" stop-color="#a8a8a8" stop-opacity="0.9"/><stop offset="1" stop-color="#f3f3f3" stop-opacity="0"/></linearGradient></defs>
<polygon points="27,20.5 67.3,20.5 97,50 97,96 38,96 12.7,69 21.7,39" fill="url(#lsh2)"/>
<polygon points="21.7,39 30.7,74 16.1,74 12.7,69" fill="#3b5068"/>
<polygon points="26.8,20.5 42,20.5 57.2,74 36.9,74 24.3,28.4" fill="#3b5068"/>
<polygon points="52.1,20.5 67.3,20.5 82.5,74 63.4,74 49.9,28.9" fill="#e84c3d"/>
<polygon points="12.7,68.9 71.8,33.4 73.2,39.1 16.1,74" fill="#d9d9d9"/>
</svg></div>
<div class="t" style="left:958.5px;top:255.6px;font-size:23px;color:#f8f8f8;-webkit-text-stroke:0.45px #f8f8f8;">Surface roughness</div>
<svg class="a" style="left:1568px;top:256px" width="20" height="20" viewBox="0 0 20 20"><path d="M2,2 L18,18 M18,2 L2,18" stroke="#fff" stroke-width="1.7"/></svg>
<div class="a" style="left:921px;top:307px;width:369px;height:281px;background:#000;"></div>
<svg class="a" style="left:0;top:0" width="2131" height="1301" viewBox="0 0 2131 1301">
<g fill="none" stroke="#e0e0e0" stroke-width="1.15">
<path d="M1256.6,365.3 H1119.5 L1009.9,548.6 L955.1,457.8 H1063"/>
<path d="M1165.2,399 L1178,388.7 V440.2"/>
<path d="M1204.5,438.5 L1208.5,436.5 M1205,438.5 L1208,439.5"/>
<path d="M1260.3,396.6 C1257,390.5 1251.5,388.7 1245.8,388.7 C1235,388.7 1230,399 1230,414 V425.3"/>
<circle cx="1245.8" cy="425.3" r="15.8"/>
</g>
<rect x="1323.5" y="353.5" width="267" height="188" fill="none" stroke="#d5d5d5" stroke-width="1"/>
<rect x="921.5" y="604.5" width="669" height="393" fill="none" stroke="#d5d5d5" stroke-width="1"/>
</svg>
<div class="a" style="left:1338px;top:345px;width:140px;height:14px;background:#394150;"></div>
<div class="t" style="left:1343.0px;top:348.3px;font-size:20px;color:#f4f4f4;letter-spacing:0.25px;-webkit-text-stroke:0.3px #f4f4f4;">Basic symbols</div>
<div class="a" style="left:1332px;top:381px;width:55px;height:55px;background:#5c6470;"></div>
<div class="a" style="left:1340px;top:389px;width:39px;height:39px;background:#000;"></div>
<div class="a" style="left:1403px;top:389px;width:39px;height:39px;background:#000;"></div>
<div class="a" style="left:1466px;top:389px;width:39px;height:39px;background:#000;"></div>
<svg class="a" style="left:0;top:0" width="2131" height="1301" viewBox="0 0 2131 1301">
<g fill="none" stroke="#eaeaea" stroke-width="1.2">
<path d="M1374.9,391.6 L1364.1,409.3 L1354.7,425 L1344.2,409.3 H1364.1"/>
<path d="M1437.8,391.6 L1417.6,425 L1407.3,408.8"/><circle cx="1417.6" cy="413.7" r="5.4"/><path d="M1414.5,419.8 H1420.7"/>
<path d="M1500.7,391.6 L1480.5,425 L1470.2,409"/>
</g></svg>
<div class="a" style="left:1321px;top:622px;width:18.5px;height:18.5px;border:2px solid #f4f4f4;border-radius:2.5px"></div>
<div class="t" style="left:1350.0px;top:622.1px;font-size:21px;color:#f4f4f4;-webkit-text-stroke:0.3px #f4f4f4;">requirement</div>
<div class="a" style="left:1474px;top:622px;width:18.5px;height:18.5px;border:2px solid #f4f4f4;border-radius:2.5px"></div>
<div class="a" style="left:1500px;top:616px;width:85px;height:31px;overflow:hidden"><div class="t" style="left:3.8px;top:-7.4px;font-size:19px;color:#f4f4f4;-webkit-text-stroke:0.3px #f4f4f4;">Most</div><div class="t" style="left:3.8px;top:21.4px;font-size:19px;color:#f4f4f4;letter-spacing:0.6px;-webkit-text-stroke:0.3px #f4f4f4;">symbols</div></div>
<div class="a" style="left:1315px;top:654px;width:214px;height:31px;background:#212731;border-radius:4px"></div>
<div class="a" style="left:1315px;top:691px;width:214px;height:32px;background:#343b47;border-radius:4px"></div>
<div class="a" style="left:1367px;top:753px;width:167px;height:31px;background:#212731;border-radius:4px"></div>
<div class="t" style="left:1370.0px;top:761.6px;font-size:19px;color:#e6e6e6;">1.6</div>
<div class="a" style="left:1367px;top:791px;width:167px;height:31px;background:#212731;border-radius:4px"></div>
<div class="a" style="left:1367px;top:828px;width:167px;height:31px;background:#343b47;border-radius:4px"></div>
<svg class="a" style="left:0;top:0" width="2131" height="1301" viewBox="0 0 2131 1301">
<path d="M1539,737 H1207 L1128.8,877.5 L1094,827" fill="none" stroke="#fff" stroke-width="6" stroke-linejoin="miter"/><path d="M1089.8,825.4 H1157" stroke="#fff" stroke-width="6"/>
</svg>
<div class="a" style="left:1181px;top:855px;width:38px;height:40px;background:#212731;border-radius:6px;box-shadow:0 1px 3px rgba(0,0,0,.5)"></div>
<div class="t" style="left:1190.0px;top:866.9px;font-size:19px;color:#f4f4f4;-webkit-text-stroke:0.35px #f4f4f4;">无</div>
<div class="a" style="left:935px;top:775px;width:18.5px;height:18.5px;border:2px solid #f4f4f4;border-radius:2.5px"></div>
<div class="t" style="left:964.0px;top:731.1px;font-size:20.5px;color:#f4f4f4;letter-spacing:0.2px;-webkit-text-stroke:0.3px #f4f4f4;">Add a</div>
<div class="t" style="left:964.0px;top:759.9px;font-size:20.5px;color:#f4f4f4;letter-spacing:0.2px;-webkit-text-stroke:0.3px #f4f4f4;">horizontal</div>
<div class="t" style="left:964.0px;top:788.2px;font-size:20.5px;color:#f4f4f4;letter-spacing:0.2px;-webkit-text-stroke:0.3px #f4f4f4;">line to the</div>
<div class="t" style="left:964.0px;top:816.1px;font-size:20.5px;color:#f4f4f4;letter-spacing:0.2px;-webkit-text-stroke:0.3px #f4f4f4;">long side</div>
<div class="a" style="left:929px;top:848px;width:148px;height:34px;background:#212731;border-radius:4px"></div>
<div class="a" style="left:1057px;top:861px;width:0;height:0;border-left:5.5px solid transparent;border-right:5.5px solid transparent;border-top:6px solid #e0e0e0"></div>
<div class="a" style="left:1321.5px;top:1016px;width:118.5px;height:44px;background:#2c303b;border:1px solid #262a33;border-radius:6px;box-shadow:0 2px 3px rgba(0,0,0,.3)"></div>
<div class="t" style="left:1345.5px;top:1029.8px;font-size:20px;color:#f2f2f2;font-weight:700;letter-spacing:0.6px;">Cancel</div>
<div class="a" style="left:1472px;top:1016px;width:119px;height:44px;background:#0a9de4;border:1px solid #0a8fd4;border-radius:6px;box-shadow:0 2px 3px rgba(0,0,0,.3)"></div>
<div class="t" style="left:1508.5px;top:1029.8px;font-size:20px;color:#ffffff;font-weight:700;letter-spacing:0.4px;">Sure</div>
<svg class="a" style="left:0;top:0" width="2131" height="1301" viewBox="0 0 2131 1301">
<path d="M131.8,1101 L236,1101 L225,1128.5 Q224,1130.8 221.5,1130.8 H147 Q144.5,1130.8 143.5,1128.5 Z" fill="#28292e"/>
<path d="M231,1117.5 L238.5,1130.5 M346.5,1101 L331,1130.5" fill="none" stroke="#2a2f38" stroke-width="1.2"/>
</svg>
<div class="t" style="left:157.0px;top:1107.5px;font-size:20px;color:#f0f0f0;">Model</div>
<div class="t" style="left:248.5px;top:1107.5px;font-size:20px;color:#f0f0f0;">Layout1</div>
<div class="t" style="left:2.0px;top:1159.8px;font-size:19px;color:#ffffff;">指定边界:</div>
<div class="t" style="left:2.0px;top:1187.0px;font-size:20px;color:#ffffff;">command:</div>
<div class="t" style="left:2.0px;top:1215.8px;font-size:19px;color:#ffffff;">指定边界:</div>
<svg class="a" style="left:0;top:1130px" width="2131" height="110" viewBox="0 1130 2131 110">
<path d="M2118.3,1147.8 L2125.7,1140.6 L2133,1147.8" fill="none" stroke="#fff" stroke-width="1.5"/>
<path d="M2118.3,1225.4 L2125.7,1232.8 L2133,1225.4" fill="none" stroke="#fff" stroke-width="1.5"/>
</svg>
<div class="a" style="left:2118px;top:1172px;width:18px;height:44px;background:#78bce8;border-radius:9px"></div>
<svg class="a" style="left:3px;top:1247px" width="24" height="20" viewBox="0 0 24 20">
<rect x="1.5" y="1.5" width="20.5" height="17" fill="none" stroke="#6cb4e8" stroke-width="1.8"/>
<path d="M5.5,6 L9,9 L5.5,12 M10,13 H16" fill="none" stroke="#6cb4e8" stroke-width="1.5"/>
</svg>
<div class="t" style="left:29.5px;top:1248.0px;font-size:20px;color:#f4f4f4;">command:</div>
<div class="a" style="left:7px;top:1272px;width:237px;height:40px;background:#666;border-radius:20px"></div>
<div class="t" style="left:20.0px;top:1278.8px;font-size:19px;color:#ffffff;">-285.132,1293.841,0.000</div>
<div class="a" style="left:1476px;top:1273px;width:188px;height:35px;background:#4f5a6e;border-radius:4px"></div>
<div class="a" style="left:1678px;top:1273px;width:194px;height:35px;background:#4f5a6e;border-radius:4px"></div>
<div class="a" style="left:1885px;top:1273px;width:73px;height:35px;background:#4f5a6e;border-radius:4px"></div>
<div class="t" style="left:1094.0px;top:1279.2px;font-size:20px;color:#eeeeee;font-weight:700;">Grid</div>
<div class="t" style="left:1183.0px;top:1279.2px;font-size:20px;color:#eeeeee;font-weight:700;letter-spacing:0.9px;">Orthogonal</div>
<div class="t" style="left:1347.0px;top:1279.2px;font-size:20px;color:#eeeeee;font-weight:700;letter-spacing:0.35px;">Polar Axis</div>
<div class="t" style="left:1493.0px;top:1279.2px;font-size:20px;color:#eeeeee;font-weight:700;letter-spacing:0.85px;">Object Capture</div>
<div class="t" style="left:1694.0px;top:1279.2px;font-size:20px;color:#eeeeee;font-weight:700;letter-spacing:0.75px;">Object Tracking</div>
<div class="t" style="left:1902.0px;top:1279.2px;font-size:20px;color:#eeeeee;font-weight:700;letter-spacing:-0.2px;">DYN</div>
<div class="t" style="left:1989.0px;top:1279.2px;font-size:20px;color:#eeeeee;font-weight:700;letter-spacing:0.7px;">Line Width</div>
<div class="t" style="left:782.0px;top:581.6px;font-size:41px;color:#ff2418;letter-spacing:0.2px;-webkit-text-stroke-width:0;">Double-click to modify</div>
<div class="t" style="left:782.0px;top:629.6px;font-size:41px;color:#ff2418;-webkit-text-stroke-width:0;">the original node</div>
<svg class="a" style="left:0;top:0" width="2131" height="1301" viewBox="0 0 2131 1301"><path d="M754,563.5 L930.9,488.8 L925.1,483.1 L949,487.3 L934.4,505.5 L934.6,497.3 Z" fill="#ff2418"/></svg>
<svg class="a" style="left:0;top:0" width="2131" height="1301" viewBox="0 0 2131 1301"><path d="M921.5,680 V604.5 H1220" fill="none" stroke="#d5d5d5" stroke-width="1"/></svg></body></html>
